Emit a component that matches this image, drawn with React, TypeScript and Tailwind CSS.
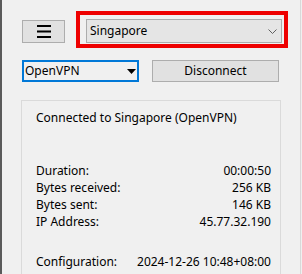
export default function App() {
  const rows: [string, string][] = [
    ["Duration:", "00:00:50"],
    ["Bytes received:", "256 KB"],
    ["Bytes sent:", "146 KB"],
    ["IP Address:", "45.77.32.190"],
  ];
  return (
    <div
      className="relative w-[302px] h-[274px] overflow-hidden bg-[#f0f0f0] border-l-2 border-[#5a5a5a] pl-[20px] pt-[11px] text-[12px] text-black"
      style={{ fontFamily: '"Noto Sans", "Segoe UI", sans-serif' }}
    >
      <div className="absolute right-[1px] top-0 h-full w-px bg-[#d9d9d9]" />
      {/* Row 1 */}
      <div className="flex items-start">
        <div className="mt-[9px] w-[43px] h-[23px] bg-[#e1e1e1] border border-[#adadad] flex items-center justify-center">
          <svg width="14" height="13" viewBox="0 0 14 13">
            <rect x="0" y="0" width="14" height="2" fill="#000" />
            <rect x="0" y="5.5" width="14" height="2" fill="#000" />
            <rect x="0" y="11" width="14" height="2" fill="#000" />
          </svg>
        </div>
        <div className="ml-[11px] w-[212px] h-[37px] border-4 border-[#ee0000] pl-[6px] pr-[2px] pt-[4px]">
          <div className="h-[24px] bg-[#e5e5e5] border border-[#acacac] flex items-center justify-between pl-[3px] pr-[4px]">
            <span className="leading-none">Singapore</span>
            <svg width="9" height="5" viewBox="0 0 9 5">
              <path d="M0.5 0.5 L4.5 4.5 L8.5 0.5" fill="none" stroke="#606060" strokeWidth="1" />
            </svg>
          </div>
        </div>
      </div>
      {/* Row 2 */}
      <div className="flex mt-[12px]">
        <div className="w-[117px] h-[22px] border-2 border-[#0078d7] bg-[#f0f0f0] flex items-center justify-between pl-[1px] pr-[1px]">
          <span className="leading-none">OpenVPN</span>
          <svg width="9" height="5" viewBox="0 0 9 5">
            <path d="M0 0 L9 0 L4.5 5 Z" fill="#000" />
          </svg>
        </div>
        <div className="ml-[13px] w-[127px] h-[22px] bg-[#e1e1e1] border border-[#adadad] flex items-center justify-center">
          <span className="leading-none">Disconnect</span>
        </div>
      </div>
      {/* Panel */}
      <div className="-ml-px mt-[18px] w-[260px] h-[180px] border border-[#dadada] pl-[14px] pr-[9px] pt-[8px] leading-[17px]">
        <div>Connected to Singapore (OpenVPN)</div>
        <div className="mt-[36px]">
          {rows.map(([k, v]) => (
            <div key={k} className="flex justify-between">
              <span>{k}</span>
              <span>{v}</span>
            </div>
          ))}
        </div>
        <div className="mt-[23px] flex justify-between">
          <span>Configuration:</span>
          <span>2024-12-26 10:48+08:00</span>
        </div>
      </div>
    </div>
  );
}
